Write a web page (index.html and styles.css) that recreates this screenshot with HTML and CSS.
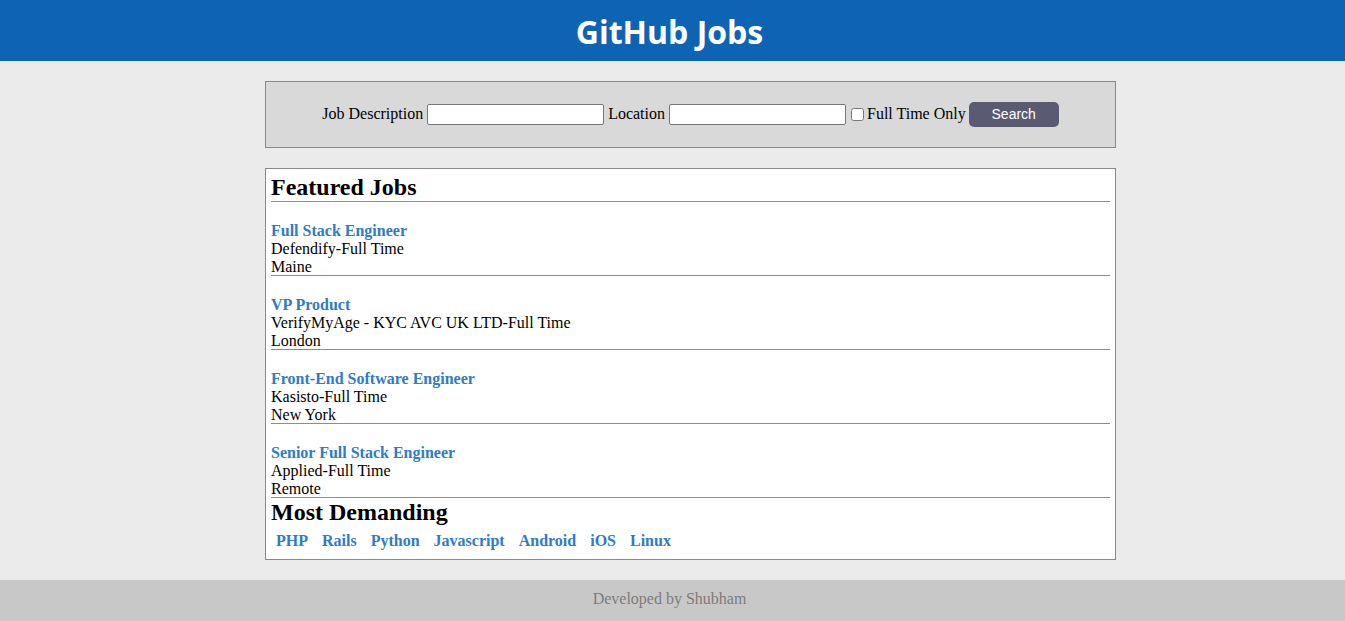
FILE: index.html
```html
<!DOCTYPE html>
<html>
<head>
<meta charset="utf-8">
<title>GitHub Jobs</title>
<link rel="stylesheet" href="styles.css">
</head>
<body>
<header class="topbar"><h1 class="brand">GitHub Jobs</h1></header>
<div class="wrap">
  <form class="search">
    <label class="lbl">Job Description</label>
    <input class="field" type="text">
    <label class="lbl">Location</label>
    <input class="field" type="text">
    <input class="check" type="checkbox">
    <label class="lbl">Full Time Only</label>
    <button type="button" class="btn">Search</button>
  </form>
  <section class="panel">
    <h2 class="heading">Featured Jobs</h2>
    <hr class="rule">
    <div class="job">
      <a class="job-title" href="#">Full Stack Engineer</a>
      <div>Defendify-Full Time</div>
      <div>Maine</div>
    </div>
    <hr class="rule">
    <div class="job">
      <a class="job-title" href="#">VP Product</a>
      <div>VerifyMyAge - KYC AVC UK LTD-Full Time</div>
      <div>London</div>
    </div>
    <hr class="rule">
    <div class="job">
      <a class="job-title" href="#">Front-End Software Engineer</a>
      <div>Kasisto-Full Time</div>
      <div>New York</div>
    </div>
    <hr class="rule">
    <div class="job">
      <a class="job-title" href="#">Senior Full Stack Engineer</a>
      <div>Applied-Full Time</div>
      <div>Remote</div>
    </div>
    <hr class="rule">
    <h2 class="heading heading-second">Most Demanding</h2>
    <div class="tags">
      <a class="tag" href="#">PHP</a>
      <a class="tag" href="#">Rails</a>
      <a class="tag" href="#">Python</a>
      <a class="tag" href="#">Javascript</a>
      <a class="tag" href="#">Android</a>
      <a class="tag" href="#">iOS</a>
      <a class="tag" href="#">Linux</a>
    </div>
  </section>
</div>
<footer class="foot">Developed by Shubham</footer>
</body>
</html>
```
FILE: styles.css
```css
html, body {
  margin: 0;
  padding: 0;
}
body {
  background: #ebebeb;
  font-family: "Liberation Serif", "Times New Roman", serif;
  font-size: 16px;
  color: #000;
}
.topbar {
  background: #0e64b4;
  height: 61px;
  display: flex;
  align-items: center;
  justify-content: center;
  padding-right: 6px;
}
.brand {
  margin: 0 0 -2px;
  color: #fff;
  font-family: "Open Sans", "Noto Sans", sans-serif;
  font-weight: 700;
  font-size: 32px;
  line-height: 1;
}
.wrap {
  width: 851px;
  margin: 0 auto;
  padding: 20px 0 20px 36px;
}
.search {
  box-sizing: border-box;
  height: 67px;
  border: 1px solid #888;
  background: #d9d9d9;
  display: flex;
  align-items: center;
  justify-content: center;
  padding: 0 0 1px 0;
}
.lbl {
  line-height: 18px;
}
.field {
  box-sizing: border-box;
  width: 177px;
  height: 21px;
  padding: 1px 2px;
  border: 1px solid #767676;
  border-radius: 2px;
  background: #fff;
  margin: 0 4px;
}
.check {
  width: 13px;
  height: 13px;
  margin: 0 3px 0 1px;
}
.btn {
  width: 90px;
  height: 25px;
  margin-left: 3px;
  border: none;
  border-radius: 5px;
  background: #5a5b72;
  color: #fff;
  font-family: "Liberation Sans", Arial, sans-serif;
  font-size: 14px;
  padding: 0;
}
.panel {
  margin-top: 20px;
  background: #fff;
  border: 1px solid #888;
  padding: 5px 5px 9px;
}
.heading {
  margin: 0;
  font-size: 24px;
  line-height: 27px;
  font-weight: 700;
}
.heading-second {
  padding-top: 1px;
}
.rule {
  margin: 0;
  border: none;
  border-top: 1px solid #8c8c8c;
  height: 0;
}
.job {
  padding-top: 20px;
  margin-bottom: -1px;
  line-height: 18px;
}
.job-title, .tag {
  display: inline-block;
  color: #2f7bc6;
  font-weight: 700;
  text-decoration: none;
}
.tags {
  margin-top: 6px;
  line-height: 18px;
}
.tag {
  padding: 0 5px;
}
.foot {
  background: #c8c8c8;
  height: 41px;
  box-sizing: border-box;
  padding: 0 6px 4px 0;
  display: flex;
  align-items: center;
  justify-content: center;
  color: #7c7c7c;
}
```
